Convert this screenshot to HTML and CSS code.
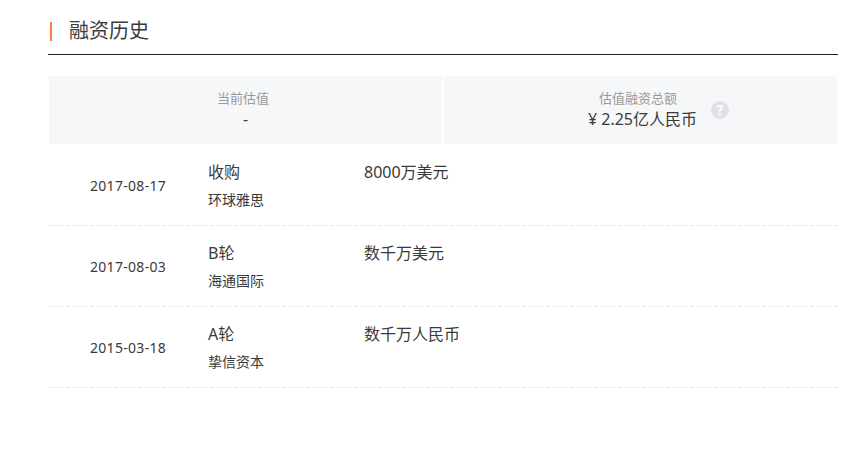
FILE: index.html
```html
<!DOCTYPE html>
<html lang="zh-CN">
<head>
<meta charset="utf-8">
<title>融资历史</title>
<link rel="stylesheet" href="styles.css">
</head>
<body>
<section class="finance">
  <header class="head"><h2 class="title">融资历史</h2></header>
  <div class="summary">
    <div class="card">
      <div class="card-label">当前估值</div>
      <div class="card-value">-</div>
    </div>
    <div class="card">
      <div class="card-label">估值融资总额</div>
      <div class="card-value card-value-amount">¥ 2.25亿人民币</div>
      <span class="help">?</span>
    </div>
  </div>
  <ul class="rows">
    <li class="row">
      <div class="date">2017-08-17</div>
      <div class="round"><div class="round-name">收购</div><div class="investor">环球雅思</div></div>
      <div class="amount">8000万美元</div>
    </li>
    <li class="row">
      <div class="date">2017-08-03</div>
      <div class="round"><div class="round-name">B轮</div><div class="investor">海通国际</div></div>
      <div class="amount">数千万美元</div>
    </li>
    <li class="row">
      <div class="date">2015-03-18</div>
      <div class="round"><div class="round-name">A轮</div><div class="investor">挚信资本</div></div>
      <div class="amount">数千万人民币</div>
    </li>
  </ul>
</section>
</body>
</html>
```
FILE: styles.css
```css
* { box-sizing: border-box; }
html, body { margin: 0; padding: 0; background: #fff; }
body {
  font-family: "Noto Sans", "Noto Sans CJK SC", sans-serif;
  color: #333;
}
.finance { margin-left: 48px; width: 790px; }
.head {
  height: 55px;
  padding-top: 22px;
  border-bottom: 1px solid #222;
}
.title {
  margin: 0 0 0 2px;
  padding-left: 17px;
  height: 19px;
  line-height: 17px;
  font-size: 20px;
  font-weight: 400;
  color: #3a3a3a;
  border-left: 2px solid #ff7a45;
}
.summary {
  display: flex;
  gap: 2px;
  margin: 21px 1px 1px;
}
.card {
  position: relative;
  flex: 1 1 0;
  height: 68px;
  background: #f6f7f9;
  display: flex;
  flex-direction: column;
  align-items: center;
  padding-top: 13px;
}
.card-label { padding-right: 5px; font-size: 13px; line-height: 18px; color: #999; }
.card-value { font-size: 16px; line-height: 24px; color: #3a3a3a; }
.card-value-amount { padding-left: 4px; }
.help {
  position: absolute;
  left: 267px;
  top: 25px;
  width: 18px;
  height: 18px;
  border-radius: 50%;
  background: #dfe1e6;
  color: #fff;
  font-size: 14px;
  font-weight: 700;
  line-height: 18px;
  text-align: center;
}
.rows { list-style: none; margin: 0; padding: 0; }
.row {
  display: flex;
  height: 81px;
  background: repeating-linear-gradient(to right, #e6e8ea 0 4px, transparent 4px 6px) left bottom / 100% 1px no-repeat;
}
.date {
  width: 160px;
  padding: 31px 0 0 42px;
  font-size: 14px;
  line-height: 20px;
  letter-spacing: 0.3px;
  color: #3a3a3a;
}
.round { width: 156px; padding-top: 16px; }
.round-name { font-size: 16px; line-height: 22px; color: #3a3a3a; }
.investor { margin-top: 7px; font-size: 14px; line-height: 20px; color: #3a3a3a; }
.amount { padding-top: 16px; font-size: 16px; line-height: 22px; color: #3a3a3a; }
```
